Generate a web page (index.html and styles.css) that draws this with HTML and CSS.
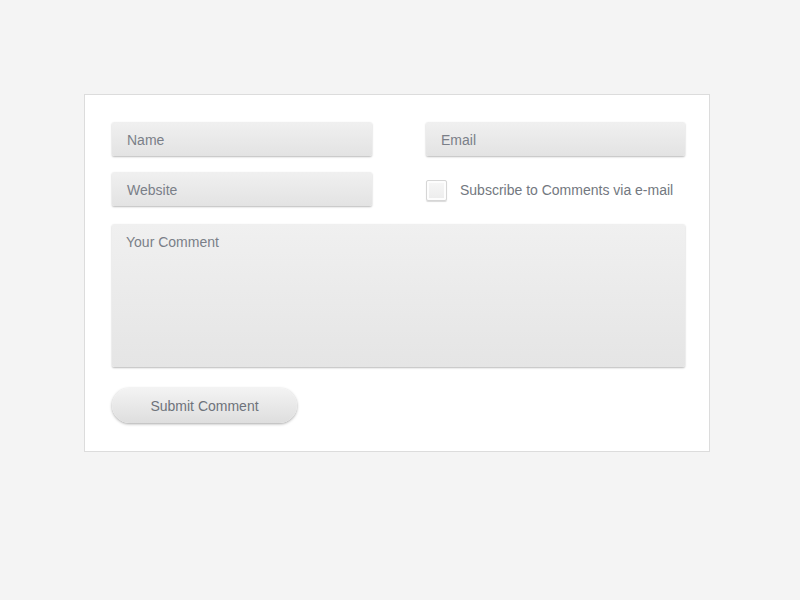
FILE: index.html
```html
<!DOCTYPE html>
<html>
<head>
<meta charset="utf-8">
<link rel="stylesheet" href="styles.css">
</head>
<body>
<div class="card">
  <div class="row">
    <div class="field">Name</div>
    <div class="field">Email</div>
  </div>
  <div class="row row2">
    <div class="field">Website</div>
    <div class="check">
      <span class="box"></span>
      <span class="label">Subscribe to Comments via e-mail</span>
    </div>
  </div>
  <div class="comment">Your Comment</div>
  <div class="button">Submit Comment</div>
</div>
</body>
</html>
```
FILE: styles.css
```css
html, body {
  margin: 0;
  padding: 0;
  background: #f4f4f4;
  font-family: "Liberation Sans", Arial, sans-serif;
  font-size: 14px;
  color: #7a7f88;
}
.card {
  margin: 94px 0 0 84px;
  width: 573px;
  padding: 27px 24px 28px 27px;
  background: #ffffff;
  border: 1px solid #dcdcdc;
  display: flex;
  flex-direction: column;
}
.row {
  display: grid;
  grid-template-columns: 260px 259px;
  column-gap: 54px;
}
.row2 {
  margin-top: 16px;
}
.field {
  height: 34px;
  box-sizing: border-box;
  padding: 1px 15px 0;
  display: flex;
  align-items: center;
  background: linear-gradient(#f0f0f0, #e3e3e3);
  border-radius: 2px;
  box-shadow: 0 1px 2px rgba(0, 0, 0, 0.28);
}
.check {
  display: flex;
  align-items: center;
  gap: 13px;
  padding-top: 2px;
}
.box {
  width: 19px;
  height: 19px;
  border: 1px solid #d6d6d6;
  border-radius: 2px;
  background: linear-gradient(#f7f7f7, #ececec);
  box-shadow: inset 0 0 0 2px #fdfdfd, 0 1px 1px rgba(0, 0, 0, 0.15);
}
.label {
  color: #737880;
}
.comment {
  margin-top: 18px;
  height: 143px;
  box-sizing: border-box;
  padding: 10px 14px;
  background: linear-gradient(#f0f0f0, #e5e5e5);
  border-radius: 2px;
  box-shadow: 0 1px 2px rgba(0, 0, 0, 0.28);
}
.button {
  margin-top: 21px;
  width: 185px;
  height: 35px;
  border-radius: 18px;
  display: flex;
  align-items: center;
  justify-content: center;
  background: linear-gradient(#f3f3f3, #dedede);
  box-shadow: 0 1px 3px rgba(0, 0, 0, 0.35);
  color: #6e737b;
}
```
